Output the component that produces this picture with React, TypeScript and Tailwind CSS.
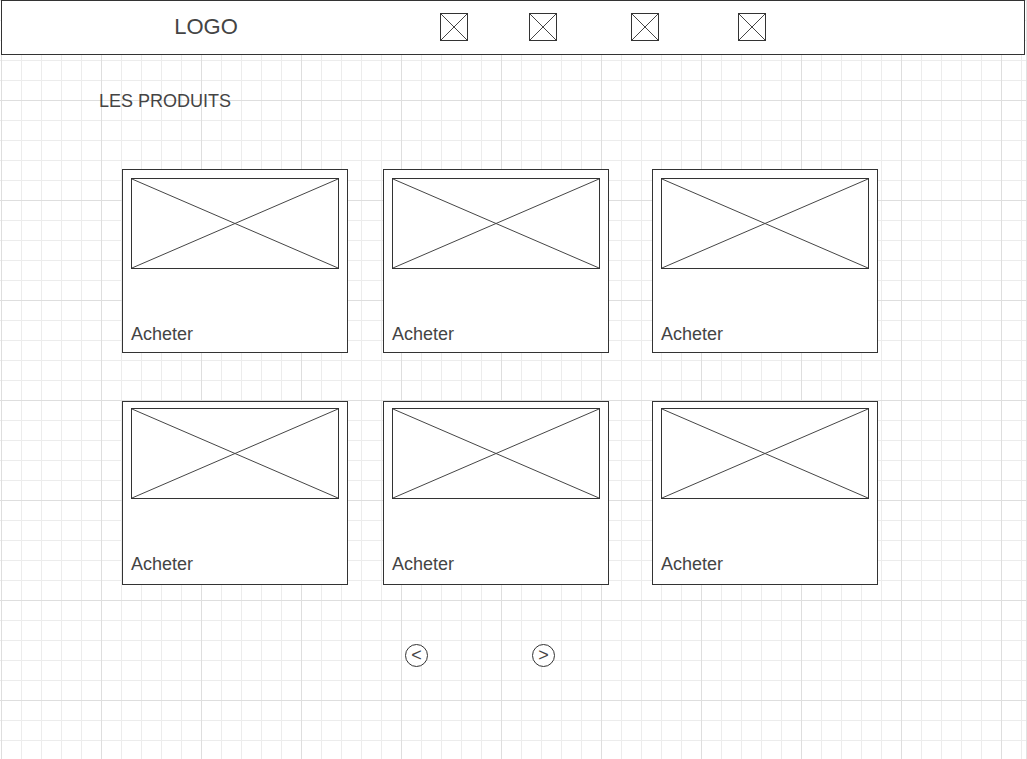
import React from 'react'

const font = "font-['Liberation_Sans',Arial,sans-serif]"

function CrossBox({ className }: { className: string }) {
  return (
    <div className={`border border-[#333] bg-white ${className}`}>
      <svg className="block w-full h-full" viewBox="0 0 100 100" preserveAspectRatio="none">
        <line x1="0" y1="0" x2="100" y2="100" stroke="#444" strokeWidth="1" vectorEffect="non-scaling-stroke" />
        <line x1="100" y1="0" x2="0" y2="100" stroke="#444" strokeWidth="1" vectorEffect="non-scaling-stroke" />
      </svg>
    </div>
  )
}

function ProductCard({ className, top, bottom }: { className: string; top: string; bottom: string }) {
  return (
    <div className={`w-[226px] h-[184px] border border-[#333] bg-white flex flex-col px-[8px] ${top} ${bottom} ${className}`}>
      <CrossBox className="w-[208px] h-[91px]" />
      <div className="mt-auto text-[18px] leading-[21px] text-[#444]">Acheter</div>
    </div>
  )
}

export default function App() {
  return (
    <div
      className={`${font} w-[1027px] h-[759px] overflow-hidden border-r border-[#e2e2e2] bg-white bg-[linear-gradient(to_right,#dedede_1px,transparent_1px),linear-gradient(to_bottom,#dedede_1px,transparent_1px),linear-gradient(to_right,#ececec_1px,transparent_1px),linear-gradient(to_bottom,#ececec_1px,transparent_1px)] [background-size:100px_100px,100px_100px,20px_20px,20px_20px] [background-position:1px_0,1px_0,1px_0,1px_0]`}
    >
      {/* Header */}
      <div className="ml-px w-[1024px] h-[55px] border border-[#333] bg-white flex items-start pt-[12px]">
        <div className="w-[408px] mt-px text-center text-[22px] leading-[25px] text-[#444]">LOGO</div>
        <CrossBox className="ml-[30px] w-[28px] h-[28px]" />
        <CrossBox className="ml-[61px] w-[28px] h-[28px]" />
        <CrossBox className="ml-[74px] w-[28px] h-[28px]" />
        <CrossBox className="ml-[79px] w-[28px] h-[28px]" />
      </div>

      {/* Title */}
      <div className="ml-[99px] mt-[36px] text-[18px] leading-[21px] text-[#444]">LES PRODUITS</div>

      {/* Products */}
      <div className="ml-[122px] mt-[57px] flex">
        <ProductCard className="" top="pt-[8px]" bottom="pb-[7px]" />
        <ProductCard className="ml-[35px]" top="pt-[8px]" bottom="pb-[7px]" />
        <ProductCard className="ml-[43px]" top="pt-[8px]" bottom="pb-[7px]" />
      </div>
      <div className="ml-[122px] mt-[48px] flex">
        <ProductCard className="" top="pt-[6px]" bottom="pb-[9px]" />
        <ProductCard className="ml-[35px]" top="pt-[6px]" bottom="pb-[9px]" />
        <ProductCard className="ml-[43px]" top="pt-[6px]" bottom="pb-[9px]" />
      </div>

      {/* Pagination */}
      <div className="ml-[405px] mt-[59px] flex">
        <button className="w-[23px] h-[23px] rounded-full border border-[#333] bg-white flex items-center justify-center text-[18px] leading-none text-[#444] pb-px">
          &lt;
        </button>
        <button className="ml-[104px] w-[23px] h-[23px] rounded-full border border-[#333] bg-white flex items-center justify-center text-[18px] leading-none text-[#444] pb-px">
          &gt;
        </button>
      </div>
    </div>
  )
}
